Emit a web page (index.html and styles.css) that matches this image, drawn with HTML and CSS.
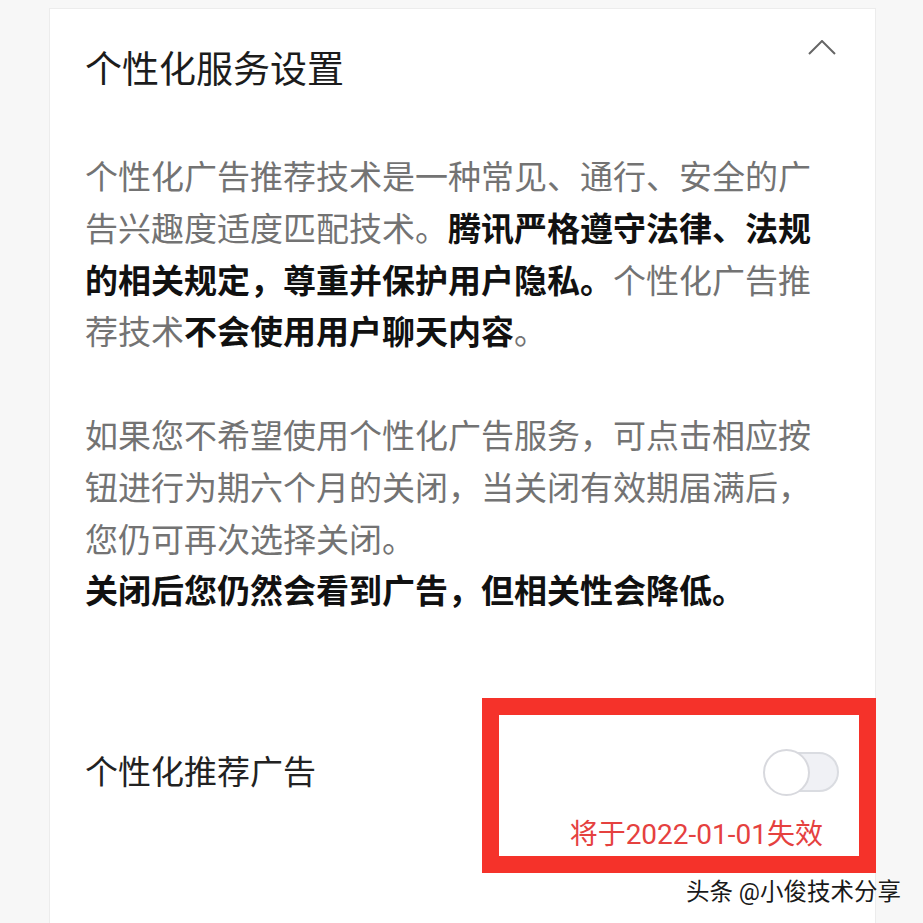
FILE: index.html
```html
<!DOCTYPE html>
<html lang="zh-CN">
<head>
    <meta charset="UTF-8">
    <meta name="viewport" content="width=device-width, initial-scale=1.0">
    <title>个性化服务设置</title>
    <link rel="stylesheet" href="styles.css">
</head>
<body>
    <div class="card">
        <header class="card-head">
            <h1>个性化服务设置</h1>
            <svg class="chevron" width="28" height="16" viewBox="0 0 28 16">
                <path d="M1 14 L14 1 L27 14" fill="none" stroke="#666" stroke-width="2"/>
            </svg>
        </header>

        <p class="desc">个性化广告推荐技术是一种常见、通行、安全的广告兴趣度适度匹配技术。<b>腾讯严格遵守法律、法规的相关规定，尊重并保护用户隐私。</b>个性化广告推荐技术<b>不会使用用户聊天内容</b>。</p>

        <p class="desc">如果您不希望使用个性化广告服务，可点击相应按钮进行为期六个月的关闭，当关闭有效期届满后，您仍可再次选择关闭。<br><b>关闭后您仍然会看到广告，但相关性会降低。</b></p>

        <div class="setting">
            <span class="setting-label">个性化推荐广告</span>
            <div class="setting-side">
                <div class="switch">
                    <div class="switch-track"></div>
                    <div class="switch-knob"></div>
                </div>
                <span class="expire">将于2022-01-01失效</span>
            </div>
            <div class="mark-box"></div>
        </div>
    </div>

    <div class="watermark">头条 @小俊技术分享</div>
</body>
</html>
```

FILE: styles.css
```css
body {
    margin: 0;
    padding: 0;
    background: #f7f7f7;
    font-family: Roboto, "Noto Sans CJK SC", sans-serif;
    color: #222;
    position: relative;
    height: 923px;
    overflow: hidden;
}

.card {
    margin: 8px 0 0 49px;
    width: 827px;
    min-height: 915px;
    box-sizing: border-box;
    background: #fff;
    border: 1px solid #ececec;
    border-bottom: none;
    padding: 0 35px;
}

.card-head {
    display: flex;
    justify-content: space-between;
    align-items: flex-start;
}

.card-head h1 {
    margin: 37px 0 0 0;
    font-size: 37px;
    line-height: 50px;
    font-weight: 400;
    color: #1c1c1c;
}

.chevron {
    margin: 31px 4px 0 0;
}

.desc {
    margin: 56px 0 0 0;
    font-size: 33px;
    line-height: 51.8px;
    color: #737373;
}

.desc + .desc {
    margin-top: 51.8px;
}

.desc b {
    color: #111;
    font-weight: 700;
}

.setting {
    position: relative;
    display: flex;
    justify-content: space-between;
    align-items: flex-start;
    margin-top: 131px;
}

.setting-label {
    font-size: 33px;
    line-height: 47px;
    color: #222;
}

.setting-side {
    display: flex;
    flex-direction: column;
    align-items: flex-end;
}

.switch {
    position: relative;
    width: 76px;
    height: 47px;
    margin-right: 1px;
}

.switch-track {
    margin: 3px 0 0 4px;
    height: 40px;
    box-sizing: border-box;
    border: 2px solid #dadce1;
    border-radius: 20px;
    background: #f0f1f5;
}

.switch-knob {
    position: absolute;
    left: 0;
    top: 0;
    width: 47px;
    height: 47px;
    box-sizing: border-box;
    border: 2px solid #d8d9de;
    border-radius: 50%;
    background: #fff;
}

.expire {
    margin: 19px 17px 0 0;
    font-size: 28px;
    line-height: 40px;
    color: #e5413f;
}

.mark-box {
    position: absolute;
    left: 397px;
    top: -51px;
    width: 394px;
    height: 175px;
    box-sizing: border-box;
    border: 17px solid #f5322a;
}

.watermark {
    position: absolute;
    left: 686px;
    top: 877px;
    font-size: 23.5px;
    line-height: 30px;
    color: #1a1a1a;
    text-shadow: 0 0 2px #fff, 0 0 2px #fff, 0 0 3px #fff;
}
```
